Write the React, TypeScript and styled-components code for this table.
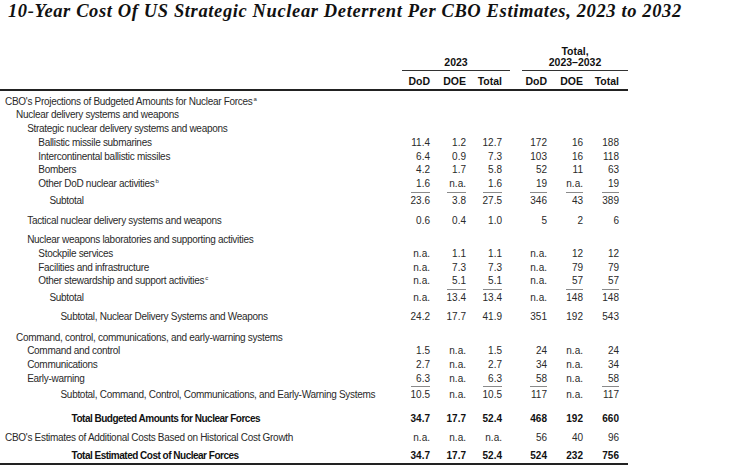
import React from "react";
import styled, { createGlobalStyle } from "styled-components";

const GlobalStyle = createGlobalStyle`
  html, body { margin: 0; padding: 0; background: #ffffff; }
  body { font-family: "Liberation Sans", Arial, sans-serif; color: #222; }
`;

const COLS = "402px 36px 36px 36px 9px 36px 36px 36px";

const Page = styled.div`
  width: 737px;
  height: 471px;
  overflow: hidden;
`;

const Title = styled.h1`
  margin: 0 0 24px 8px;
  height: 22px;
  font-family: "Liberation Serif", "Times New Roman", serif;
  font-style: italic;
  font-weight: bold;
  font-size: 18.5px;
  line-height: 22px;
  letter-spacing: 0.62px;
  color: #111;
  white-space: nowrap;
`;

const Table = styled.div`
  width: 628px;
  font-size: 10px;
`;

const HeadGroups = styled.div`
  display: grid;
  grid-template-columns: 402px 108px 9px 108px;
  align-items: end;
`;

const GroupHead = styled.div<{ $inset?: number }>`
  margin-left: ${(p) => p.$inset ?? 0}px;
  margin-right: ${(p) => (p.$inset ? -1 : 0)}px;
  padding-bottom: 2.5px;
  border-bottom: 1.5px solid #333;
  text-align: center;
  font-weight: bold;
  font-size: 10.5px;
  line-height: 10.5px;
  color: #111;
`;

const HeadCols = styled.div`
  display: grid;
  grid-template-columns: ${COLS};
  padding: 4.5px 0 0.5px;
  line-height: 13px;
  font-size: 10.5px;
  font-weight: bold;
  color: #111;
  border-bottom: 2px solid #222;
`;

const ColHead = styled.div`
  text-align: right;
  padding-right: 8px;
  white-space: nowrap;
`;

const Body = styled.div`
  padding: 4px 0 0.3px;
  border-bottom: 2px solid #222;
`;

const Row = styled.div<{ $gap: number; $bold?: boolean }>`
  display: grid;
  grid-template-columns: ${COLS};
  align-items: end;
  margin-top: ${(p) => p.$gap}px;
  line-height: 13.75px;
  font-weight: ${(p) => (p.$bold ? "bold" : "normal")};
  color: ${(p) => (p.$bold ? "#111" : "#2a2a2a")};
`;

const Label = styled.div<{ $level: number; $bold?: boolean }>`
  padding-left: ${(p) => 5 + p.$level * 11.1}px;
  letter-spacing: ${(p) => (p.$bold ? -0.5 : -0.3)}px;
  white-space: nowrap;
`;

const Sup = styled.sup`
  font-size: 6px;
  line-height: 0;
  vertical-align: 4px;
  margin-left: 1px;
`;

const NumCell = styled.div`
  display: flex;
  justify-content: flex-end;
  align-items: flex-end;
  padding-right: 8px;
`;

const Val = styled.span<{ $rule?: boolean; $w: number }>`
  display: block;
  min-width: ${(p) => p.$w}px;
  text-align: right;
  white-space: nowrap;
  border-top: ${(p) => (p.$rule ? "1px solid #8a8a8a" : "none")};
  padding-top: ${(p) => (p.$rule ? 0.5 : 0)}px;
`;

type RowData = {
  label: string;
  sup?: string;
  level: number;
  vals?: string[];
  gap?: number;
  bold?: boolean;
  rules?: number[];
};

const rows: RowData[] = [
  { label: "CBO's Projections of Budgeted Amounts for Nuclear Forces", sup: "a", level: 0 },
  { label: "Nuclear delivery systems and weapons", level: 1 },
  { label: "Strategic nuclear delivery systems and weapons", level: 2 },
  { label: "Ballistic missile submarines", level: 3, vals: ["11.4", "1.2", "12.7", "172", "16", "188"] },
  { label: "Intercontinental ballistic missiles", level: 3, vals: ["6.4", "0.9", "7.3", "103", "16", "118"] },
  { label: "Bombers", level: 3, vals: ["4.2", "1.7", "5.8", "52", "11", "63"] },
  { label: "Other DoD nuclear activities", sup: "b", level: 3, vals: ["1.6", "n.a.", "1.6", "19", "n.a.", "19"] },
  { label: "Subtotal", level: 4, vals: ["23.6", "3.8", "27.5", "346", "43", "389"], gap: 1.25, rules: [1, 1, 1, 1, 1, 1] },
  { label: "Tactical nuclear delivery systems and weapons", level: 2, vals: ["0.6", "0.4", "1.0", "5", "2", "6"], gap: 6.25 },
  { label: "Nuclear weapons laboratories and supporting activities", level: 2, gap: 5.75 },
  { label: "Stockpile services", level: 3, vals: ["n.a.", "1.1", "1.1", "n.a.", "12", "12"] },
  { label: "Facilities and infrastructure", level: 3, vals: ["n.a.", "7.3", "7.3", "n.a.", "79", "79"] },
  { label: "Other stewardship and support activities", sup: "c", level: 3, vals: ["n.a.", "5.1", "5.1", "n.a.", "57", "57"] },
  { label: "Subtotal", level: 4, vals: ["n.a.", "13.4", "13.4", "n.a.", "148", "148"], gap: 1.0, rules: [0, 1, 1, 0, 1, 1] },
  { label: "Subtotal, Nuclear Delivery Systems and Weapons", level: 5, vals: ["24.2", "17.7", "41.9", "351", "192", "543"], gap: 5.5 },
  { label: "Command, control, communications, and early-warning systems", level: 1, gap: 7.2 },
  { label: "Command and control", level: 2, vals: ["1.5", "n.a.", "1.5", "24", "n.a.", "24"] },
  { label: "Communications", level: 2, vals: ["2.7", "n.a.", "2.7", "34", "n.a.", "34"] },
  { label: "Early-warning", level: 2, vals: ["6.3", "n.a.", "6.3", "58", "n.a.", "58"] },
  {
    label: "Subtotal, Command, Control, Communications, and Early-Warning Systems",
    level: 5,
    vals: ["10.5", "n.a.", "10.5", "117", "n.a.", "117"],
    gap: 0.4,
    rules: [1, 0, 1, 1, 0, 1],
  },
  { label: "Total Budgeted Amounts for Nuclear Forces", level: 6, bold: true, vals: ["34.7", "17.7", "52.4", "468", "192", "660"], gap: 10.5 },
  { label: "CBO's Estimates of Additional Costs Based on Historical Cost Growth", level: 0, vals: ["n.a.", "n.a.", "n.a.", "56", "40", "96"], gap: 5.3 },
  { label: "Total Estimated Cost of Nuclear Forces", level: 6, bold: true, vals: ["34.7", "17.7", "52.4", "524", "232", "756"], gap: 4.8 },
];

const heads = ["DoD", "DOE", "Total"];

function renderNums(r: RowData) {
  const cells: React.ReactNode[] = [];
  for (let i = 0; i < 6; i++) {
    if (i === 3) cells.push(<div key="sp" />);
    const v = r.vals ? r.vals[i] : "";
    cells.push(
      <NumCell key={i}>
        {v ? (
          <Val $w={i < 3 ? 19 : 17} $rule={!!(r.rules && r.rules[i])}>
            {v}
          </Val>
        ) : null}
      </NumCell>
    );
  }
  return cells;
}

export default function App() {
  return (
    <Page>
      <GlobalStyle />
      <Title>10-Year Cost Of US Strategic Nuclear Deterrent Per CBO Estimates, 2023 to 2032</Title>
      <Table>
        <HeadGroups>
          <div />
          <GroupHead>2023</GroupHead>
          <div />
          <GroupHead $inset={3}>
            Total,
            <br />
            2023–2032
          </GroupHead>
        </HeadGroups>
        <HeadCols>
          <div />
          {heads.map((h) => (
            <ColHead key={"a" + h}>{h}</ColHead>
          ))}
          <div />
          {heads.map((h) => (
            <ColHead key={"b" + h}>{h}</ColHead>
          ))}
        </HeadCols>
        <Body>
          {rows.map((r, idx) => (
            <Row key={idx} $gap={r.gap ?? 0} $bold={r.bold}>
              <Label $level={r.level} $bold={r.bold}>
                {r.label}
                {r.sup ? <Sup>{r.sup}</Sup> : null}
              </Label>
              {renderNums(r)}
            </Row>
          ))}
        </Body>
      </Table>
    </Page>
  );
}
